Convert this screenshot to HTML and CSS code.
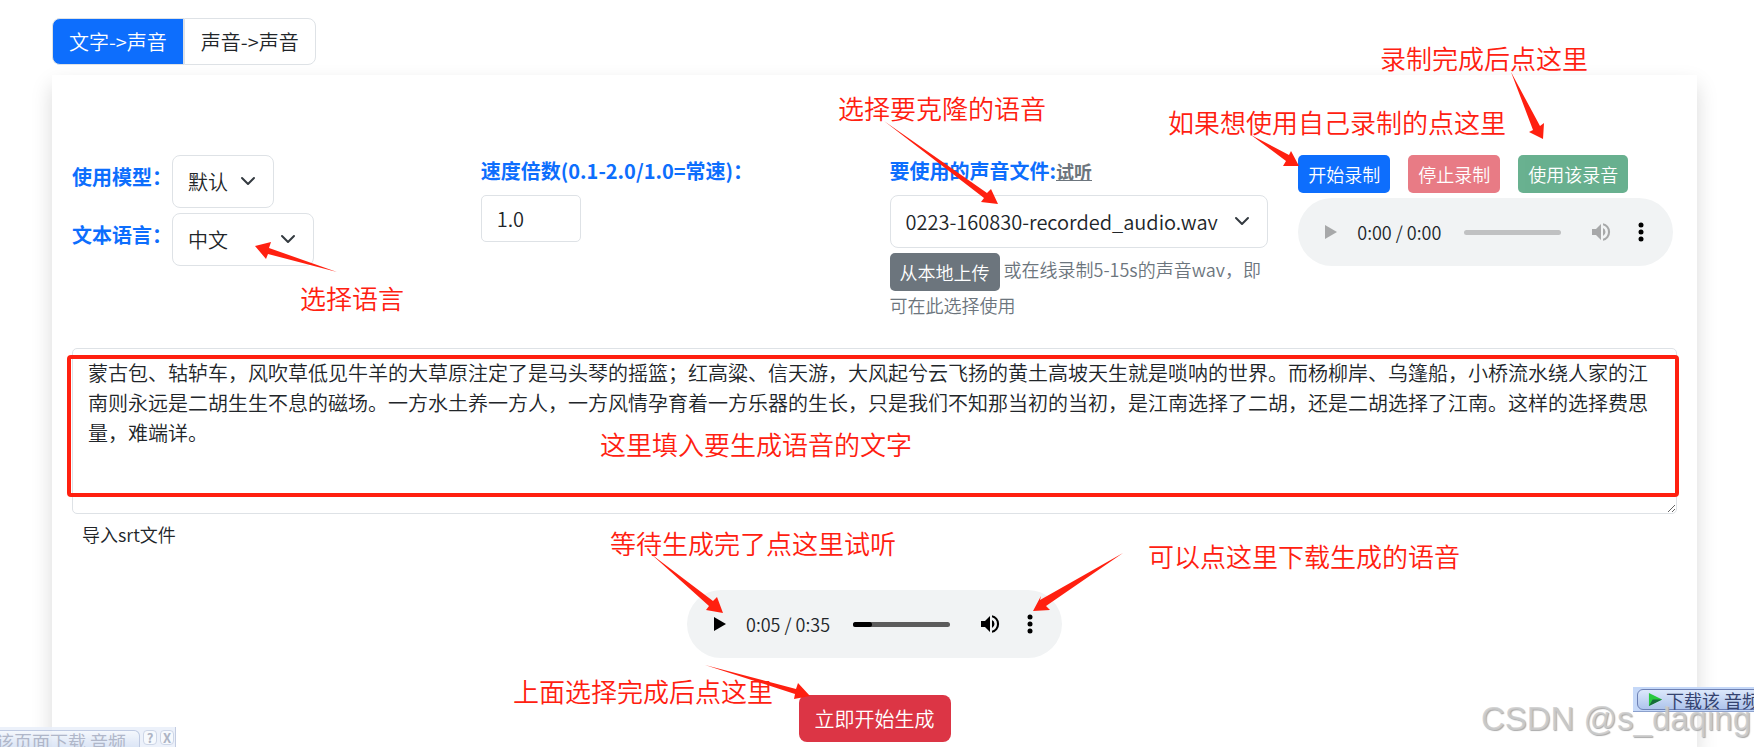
FILE: index.html
```html
<!DOCTYPE html>
<html lang="zh-CN">
<head>
    <meta charset="UTF-8">
    <meta name="viewport" content="width=device-width, initial-scale=1.0">
    <title>文字->声音</title>
    <link rel="stylesheet" href="styles.css">
</head>
<body>
    <div class="tabs">
        <button type="button" class="tab active">文字-&gt;声音</button>
        <button type="button" class="tab">声音-&gt;声音</button>
    </div>

    <form class="card">
        <div class="options">
            <div class="col">
                <div class="field-row">
                    <label for="model">使用模型：</label>
                    <div class="select-wrap">
                        <select id="model" class="select-model"><option>默认</option></select>
                        <svg class="chevron" viewBox="0 0 16 16"><path d="m2 5 6 6 6-6"/></svg>
                    </div>
                </div>
                <div class="field-row">
                    <label for="language">文本语言：</label>
                    <div class="select-wrap">
                        <select id="language" class="select-language"><option>中文</option></select>
                        <svg class="chevron" viewBox="0 0 16 16"><path d="m2 5 6 6 6-6"/></svg>
                    </div>
                </div>
            </div>

            <div class="col">
                <div class="field-title"><label for="speed">速度倍数(0.1-2.0/1.0=常速)：</label></div>
                <input type="text" id="speed" class="speed" value="1.0">
            </div>

            <div class="col">
                <div class="field-title"><label for="voice">要使用的声音文件:</label><a href="#" class="listen">试听</a></div>
                <div class="select-wrap">
                    <select id="voice" class="select-voice"><option>0223-160830-recorded_audio.wav</option></select>
                    <svg class="chevron" viewBox="0 0 16 16"><path d="m2 5 6 6 6-6"/></svg>
                </div>
                <p class="hint"><button type="button" class="btn btn-sm btn-secondary">从本地上传</button> 或在线录制5-15s的声音wav，即可在此选择使用</p>
            </div>

            <div class="col">
                <div class="record-buttons">
                    <button type="button" class="btn btn-sm btn-primary">开始录制</button>
                    <button type="button" class="btn btn-sm btn-danger" disabled>停止录制</button>
                    <button type="button" class="btn btn-sm btn-success" disabled>使用该录音</button>
                </div>
                <div class="player empty">
                    <button type="button" class="play" aria-label="播放" disabled>
                        <svg viewBox="0 0 24 24"><path d="M7 5v14l12-7z"/></svg>
                    </button>
                    <span class="time">0:00 / 0:00</span>
                    <div class="track"></div>
                    <button type="button" class="volume" aria-label="音量" disabled>
                        <svg viewBox="0 0 24 24"><path d="M3 9v6h4l5 5V4L7 9H3zm13.5 3A4.5 4.5 0 0 0 14 8v8a4.5 4.5 0 0 0 2.5-4zM14 3.2v2.1a7 7 0 0 1 0 13.4v2.1a9 9 0 0 0 0-17.6z"/></svg>
                    </button>
                    <button type="button" class="more" aria-label="更多">
                        <svg viewBox="0 0 24 24"><circle cx="12" cy="5" r="2.5"/><circle cx="12" cy="12" r="2.5"/><circle cx="12" cy="19" r="2.5"/></svg>
                    </button>
                </div>
            </div>
        </div>

        <div class="text-box">
            <textarea id="text" aria-label="文字">蒙古包、轱轳车，风吹草低见牛羊的大草原注定了是马头琴的摇篮；红高粱、信天游，大风起兮云飞扬的黄土高坡天生就是唢呐的世界。而杨柳岸、乌篷船，小桥流水绕人家的江南则永远是二胡生生不息的磁场。一方水土养一方人，一方风情孕育着一方乐器的生长，只是我们不知那当初的当初，是江南选择了二胡，还是二胡选择了江南。这样的选择费思量，难端详。</textarea>
            <div class="highlight"></div>
        </div>
        <button type="button" class="btn btn-sm btn-import">导入srt文件</button>

        <div class="output">
            <div class="player">
                <button type="button" class="play" aria-label="播放">
                    <svg viewBox="0 0 24 24"><path d="M7 5v14l12-7z"/></svg>
                </button>
                <span class="time">0:05 / 0:35</span>
                <div class="track"><div class="played" style="width: 20%"></div></div>
                <button type="button" class="volume" aria-label="音量">
                    <svg viewBox="0 0 24 24"><path d="M3 9v6h4l5 5V4L7 9H3zm13.5 3A4.5 4.5 0 0 0 14 8v8a4.5 4.5 0 0 0 2.5-4zM14 3.2v2.1a7 7 0 0 1 0 13.4v2.1a9 9 0 0 0 0-17.6z"/></svg>
                </button>
                <button type="button" class="more" aria-label="更多">
                    <svg viewBox="0 0 24 24"><circle cx="12" cy="5" r="2.5"/><circle cx="12" cy="12" r="2.5"/><circle cx="12" cy="19" r="2.5"/></svg>
                </button>
            </div>
            <button type="submit" class="btn btn-submit">立即开始生成</button>
        </div>
    </form>

    <!-- notes and arrows over the page -->
    <div class="notes">
        <svg class="arrows">
            <path d="M337 272 269 248 271 242 255 246 266 259 268 254z"/>
            <path d="M884 121 987 193 991 189 998 204 981 202 984 198z"/>
            <path d="M1251 135 1289 155 1291 151 1299 166 1283 166 1286 161z"/>
            <path d="M1511 72 1540 126 1544 123 1543 139 1529 132 1533 130z"/>
            <path d="M651 554 713 601 717 597 723 613 706 610 709 606z"/>
            <path d="M1123 553 1040 600 1041 596 1033 611 1050 610 1046 606z"/>
            <path d="M705 665 796 689 798 683 810 696 794 699 795 694z"/>
        </svg>
        <span class="note note-finish">录制完成后点这里</span>
        <span class="note note-voice">选择要克隆的语音</span>
        <span class="note note-record">如果想使用自己录制的点这里</span>
        <span class="note note-language">选择语言</span>
        <span class="note note-text">这里填入要生成语音的文字</span>
        <span class="note note-listen">等待生成完了点这里试听</span>
        <span class="note note-download">可以点这里下载生成的语音</span>
        <span class="note note-submit">上面选择完成后点这里</span>
    </div>

    <div class="download-page">
        <button type="button" class="download-label">该页面下载 音频</button>
        <button type="button" class="mini">?</button>
        <button type="button" class="mini">X</button>
    </div>

    <div class="download-audio">
        <button type="button">
            <svg viewBox="0 0 16 16"><path fill="#27c93f" d="M1 1 15 8 1 15z"/><path fill="#176b3c" d="M15 8 1 15 5 8z"/></svg>
            下载该 音频
        </button>
    </div>
    <div class="watermark">CSDN @s_daqing</div>
</body>
</html>
```
FILE: styles.css
```css
* {
    box-sizing: border-box;
}

body {
    position: relative;
    height: 100vh;
    margin: 0;
    padding: 18px 57px 0 52px;
    overflow: hidden;
    background: #fff;
    color: #212529;
    font-family: "Noto Sans CJK SC", sans-serif;
    font-size: 20px;
    font-weight: 350;
    line-height: 30px;
}

button,
input,
select,
textarea {
    margin: 0;
    color: inherit;
    font: inherit;
}

button {
    cursor: pointer;
}

.tabs {
    display: flex;
    margin-bottom: 10px;
}

.tab {
    padding: 8px 16px 7px;
    background: #fff;
    border: 1px solid #dee2e6;
    border-radius: 0 8px 8px 0;
}

.tab.active {
    background: #0d6efd;
    border-radius: 8px 0 0 8px;
    color: #fff;
}

.card {
    padding: 80px 20px 8px;
    background: #fff;
    box-shadow: 0 10px 20px rgba(0, 0, 0, 0.15);
}

.options {
    display: grid;
    grid-template-columns: repeat(4, 1fr);
    gap: 30px;
    margin-bottom: 29px;
}

.field-row {
    display: flex;
    margin-bottom: 5px;
}

.field-row label {
    padding-top: 7px;
}

label {
    color: #0d6efd;
    font-weight: bold;
}

.field-title {
    padding-top: 1px;
    margin-bottom: 9px;
}

.listen {
    color: #6c757d;
    font-size: 18px;
    font-weight: bold;
}

.select-wrap {
    position: relative;
}

select {
    height: 53px;
    padding: 0 45px 0 15px;
    appearance: none;
    background: #fff;
    border: 1px solid #dee2e6;
    border-radius: 8px;
}

.select-model {
    width: 102px;
}

.select-language {
    width: 142px;
}

.select-voice {
    display: block;
    width: 100%;
}

.chevron {
    position: absolute;
    top: 18px;
    right: 18px;
    width: 16px;
    height: 16px;
    fill: none;
    stroke: #343a40;
    stroke-width: 2;
    stroke-linecap: round;
    stroke-linejoin: round;
    pointer-events: none;
}

.speed {
    width: 100px;
    height: 47px;
    padding: 0 15px;
    border: 1px solid #dee2e6;
    border-radius: 5px;
}

.hint {
    margin: 5px 0 0;
    color: #6c757d;
    font-size: 18px;
    line-height: 28px;
}

.btn {
    border: 0;
    border-radius: 8px;
    color: #fff;
}

.btn-sm {
    height: 38px;
    padding: 0 10px;
    border-radius: 5px;
    font-size: 18px;
    line-height: 28px;
}

.btn-primary {
    background: #0d6efd;
}

.btn-secondary {
    background: #6c757d;
    vertical-align: middle;
}

.btn-danger {
    background: #dc3545;
}

.btn-success {
    background: #198754;
}

.btn:disabled {
    opacity: 0.65;
}

.record-buttons {
    display: flex;
    gap: 18px;
    margin-bottom: 5px;
}

.player {
    display: flex;
    align-items: center;
    width: 375px;
    height: 68px;
    padding: 0 20px;
    background: #f1f3f4;
    border-radius: 34px;
}

.player button {
    display: flex;
    padding: 0;
    background: none;
    border: 0;
}

.player svg {
    width: 24px;
    height: 24px;
}

.play {
    margin-right: 15px;
}

.time {
    margin-right: auto;
    font-size: 18px;
}

.track {
    width: 97px;
    height: 5px;
    margin-right: 28px;
    background: #5c5c5c;
    border-radius: 3px;
}

.played {
    height: 5px;
    background: #000;
    border-radius: 3px;
}

.more {
    margin-left: 16px;
}

.empty .track {
    background: #c0c1c2;
}

.empty button:disabled {
    opacity: 0.3;
}

.text-box {
    position: relative;
}

textarea {
    display: block;
    width: 100%;
    height: 166px;
    padding: 9px 15px 5px;
    background: #fff;
    border: 1px solid #dee2e6;
    border-radius: 5px;
}

/* red frame around the text */
.highlight {
    position: absolute;
    top: 7px;
    right: -2px;
    bottom: 17px;
    left: -5px;
    border: 4px solid #ff2010;
    border-radius: 4px;
    pointer-events: none;
}

.btn-import {
    margin-top: 1px;
    background: none;
    color: #212529;
}

.output {
    display: flex;
    flex-direction: column;
    align-items: center;
    gap: 37px;
    margin-top: 37px;
}

.btn-submit {
    height: 47px;
    padding: 0 16px;
    background: #dc3545;
}

.notes {
    position: absolute;
    inset: 0;
    pointer-events: none;
}

.arrows {
    width: 100%;
    height: 100%;
    fill: #ff2010;
}

.note {
    position: absolute;
    color: #ff2010;
    font-size: 26px;
    line-height: 34px;
    white-space: nowrap;
}

.note-finish {
    top: 41px;
    left: 1380px;
}

.note-voice {
    top: 91px;
    left: 838px;
}

.note-record {
    top: 105px;
    left: 1168px;
}

.note-language {
    top: 281px;
    left: 300px;
}

.note-text {
    top: 427px;
    left: 600px;
}

.note-listen {
    top: 526px;
    left: 610px;
}

.note-download {
    top: 539px;
    left: 1148px;
}

.note-submit {
    top: 674px;
    left: 513px;
}

.download-page {
    position: absolute;
    bottom: 0;
    left: 0;
    display: flex;
    gap: 3px;
    width: 176px;
    height: 20px;
    padding-top: 3px;
    overflow: hidden;
    background: #e9effa;
    border-right: 1px solid #b9c4dc;
    opacity: 0.85;
}

.download-label {
    width: 140px;
    height: 22px;
    padding: 0;
    background: linear-gradient(#f3f7fd, #cfdcf3);
    border: 1px solid #b4c1dd;
    border-left: 0;
    border-radius: 0 6px 0 0;
    color: #a3abc0;
    font-size: 18px;
    font-weight: 400;
    line-height: 18px;
    text-indent: -4px;
    text-align: left;
    white-space: nowrap;
}

.mini {
    width: 14px;
    height: 15px;
    padding: 0;
    background: #f5f8fd;
    border: 1px solid #c5cfe3;
    border-radius: 4px;
    color: #a0a8ba;
    font-size: 13px;
    font-weight: bold;
    line-height: 12px;
}

.download-audio {
    position: absolute;
    right: 0;
    bottom: 35px;
    width: 121px;
    height: 25px;
    padding: 2px 0 2px 4px;
    overflow: hidden;
    background: #c5d8f8;
    border-bottom: 1px solid #8ba0cc;
}

.download-audio button {
    display: flex;
    align-items: center;
    gap: 3px;
    width: 130px;
    height: 21px;
    padding: 0 0 0 10px;
    background: linear-gradient(#dce8fb, #aec4ec);
    border: 1px solid #6d80b4;
    border-radius: 6px;
    color: #34436f;
    font-size: 18px;
    font-weight: 400;
    line-height: 18px;
    white-space: nowrap;
}

.download-audio svg {
    flex: none;
    width: 15px;
    height: 15px;
}

.watermark {
    position: absolute;
    right: 3px;
    bottom: 8px;
    color: rgba(205, 205, 205, 0.85);
    font-family: "Liberation Sans", sans-serif;
    font-size: 33px;
    line-height: 40px;
    text-shadow: 1px 1px 1px #aaa;
    pointer-events: none;
}
```
